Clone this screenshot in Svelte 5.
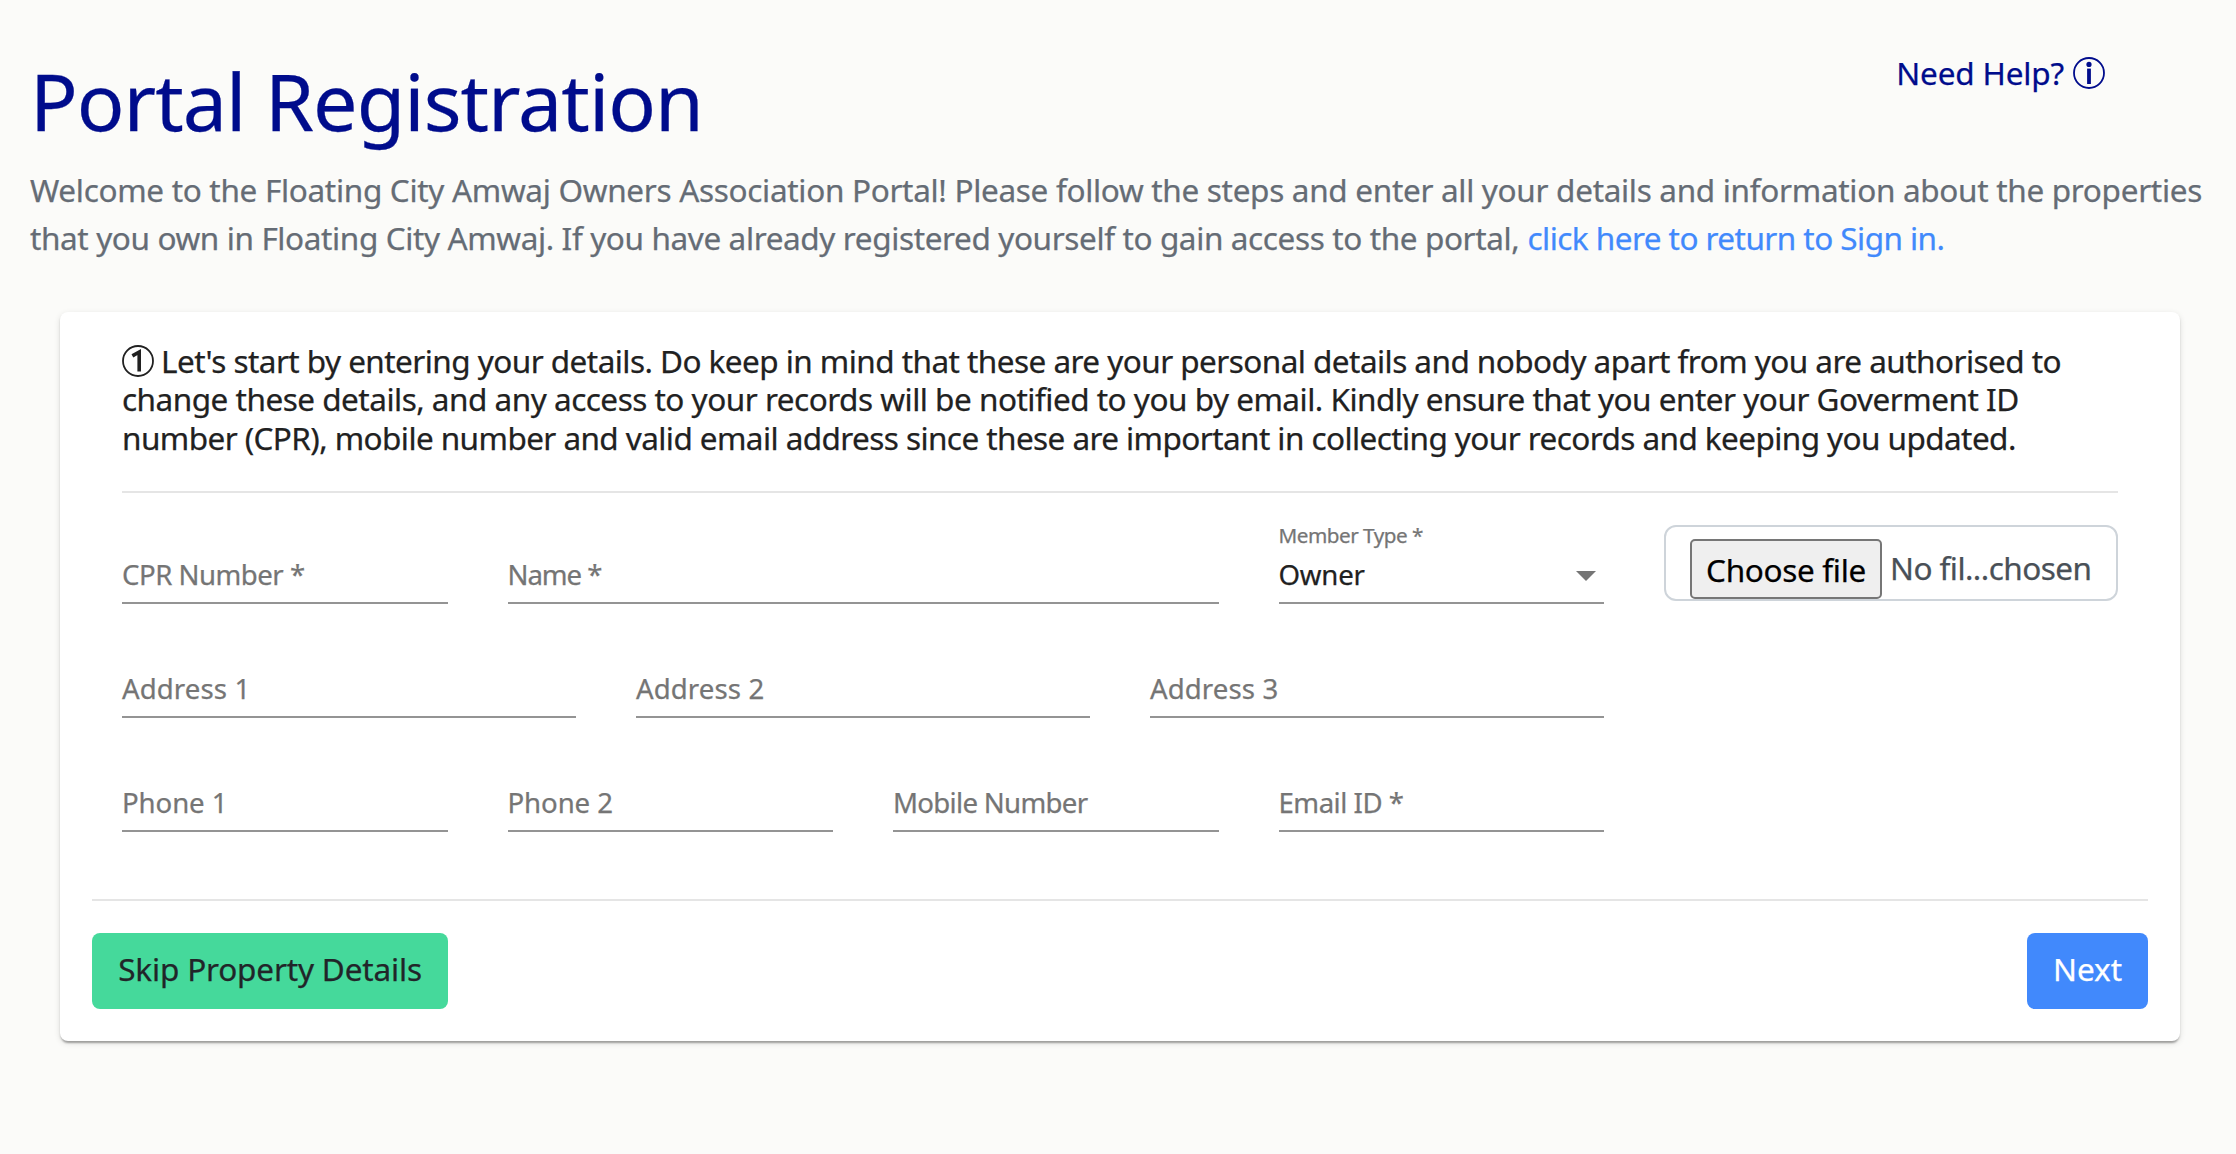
<script>
  const rows = [
    [
      { label: 'CPR Number *', span: 3 },
      { label: 'Name *', span: 6, tone: 'tight' },
      { label: 'Member Type *', span: 3, value: 'Owner' },
      { file: true }
    ],
    [
      { label: 'Address 1', span: 4, tone: 'loose' },
      { label: 'Address 2', span: 4, tone: 'loose' },
      { label: 'Address 3', span: 4, tone: 'loose' }
    ],
    [
      { label: 'Phone 1', span: 3, tone: 'digit' },
      { label: 'Phone 2', span: 3, tone: 'digit' },
      { label: 'Mobile Number', span: 3, tone: 'snug' },
      { label: 'Email ID *', span: 3 }
    ]
  ];
</script>

<main>
  <header>
    <h1>Portal Registration</h1>
    <a class="help" href="#help">
      <span>Need Help?</span>
      <svg width="32" height="32" viewBox="0 0 32 32" aria-hidden="true">
        <circle cx="16" cy="16" r="15" fill="none" stroke="currentColor" stroke-width="1.8" />
        <circle cx="16" cy="7.4" r="2.6" fill="currentColor" />
        <path d="M16 11.6V27" stroke="currentColor" stroke-width="3.8" />
      </svg>
    </a>
  </header>
  <p class="intro">
    <span class="i1">Welcome to the Floating City Amwaj Owners Association Portal! Please follow the steps and enter all your details and information about the properties</span><br />
    <span class="i2">that you own in Floating City Amwaj. If you have already registered yourself to gain access to the portal,</span>
    <a href="#signin">click here to return to Sign in.</a>
  </p>

  <section class="card">
    <div class="body">
      <p class="lead">
        <span class="l1">
          <svg width="32" height="32" viewBox="0 0 32 32" aria-hidden="true">
            <circle cx="16" cy="16" r="15" fill="none" stroke="currentColor" stroke-width="1.8" />
            <path d="M10.4 10.9L17.2 7V26.6" fill="none" stroke="currentColor" stroke-width="3.6" />
          </svg>
          Let's start by entering your details. Do keep in mind that these are your personal details and nobody apart from you are authorised to
        </span>
        <span class="l2">change these details, and any access to your records will be notified to you by email. Kindly ensure that you enter your Goverment ID</span>
        <span class="l3">number (CPR), mobile number and valid email address since these are important in collecting your records and keeping you updated.</span>
      </p>
      <hr />
      <form>
        {#each rows as row}
          <div class="row">
            {#each row as f}
              {#if f.file}
                <div class="file span4">
                  <button type="button" class="choose">Choose file</button>
                  <span class="none">No fil...chosen</span>
                </div>
              {:else}
                <div class="field span{f.span}">
                  {#if f.value}
                    <span class="small">{f.label}</span>
                    <div class="select"><span>{f.value}</span><i></i></div>
                  {:else}
                    <span class={f.tone}>{f.label}</span>
                  {/if}
                </div>
              {/if}
            {/each}
          </div>
        {/each}
      </form>
    </div>
    <hr />
    <footer>
      <button type="button" class="btn skip">Skip Property Details</button>
      <button type="button" class="btn next">Next</button>
    </footer>
  </section>
</main>

<style>
  :global(body) { margin: 0; background: #fbfbf9; }
  main {
    font-family: 'Noto Sans', sans-serif;
    font-size: 31.5px;
    padding: 48px 30px 0;
    min-height: 1154px;
    box-sizing: border-box;
    white-space: nowrap;
    -webkit-text-stroke: 0.25px currentColor;
  }
  header { display: flex; justify-content: space-between; align-items: flex-start; padding-right: 101px; color: #000c8c; }
  h1 { margin: 5px 0 0; font-size: 79px; line-height: 96px; font-weight: 400; letter-spacing: -1px; }
  .help { display: flex; gap: 9px; padding-top: 1px; line-height: 48px; color: inherit; text-decoration: none; letter-spacing: -0.16px; }
  .help svg { margin-top: 8px; }
  .intro { margin: 17px 0 50px; line-height: 48px; color: #656c75; }
  .i1 { letter-spacing: -0.31px; }
  .i2 { letter-spacing: -0.38px; }
  .intro a { color: #4189fc; text-decoration: none; letter-spacing: -0.55px; }

  .card {
    margin: 0 26px 0 30px;
    padding: 30px 32px 32px;
    background: #fff;
    border-radius: 8px;
    box-shadow: 0 4px 2px -2px rgba(0, 0, 0, .2), 0 2px 2px 0 rgba(0, 0, 0, .14), 0 2px 6px 0 rgba(0, 0, 0, .12);
  }
  .body { padding: 0 30px; }
  .lead { margin: 0 0 33.8px; line-height: 38.4px; color: #212121; }
  .lead span { display: flex; }
  .lead svg { margin: 3px 7px -3px 0; }
  .l1 { letter-spacing: -0.55px; }
  .l2 { letter-spacing: -0.5px; }
  .l3 { letter-spacing: -0.58px; }
  hr { border: 0; height: 2px; margin: 0; background: #e5e5e5; }

  form { padding: 25px 0 67px; display: grid; gap: 28px; }
  .row { display: grid; grid-template-columns: repeat(16, minmax(0, 1fr)); column-gap: 60px; height: 86px; }
  .span3 { grid-column: span 3; }
  .span4 { grid-column: span 4; }
  .span6 { grid-column: span 6; }
  .field {
    display: flex;
    flex-direction: column;
    justify-content: flex-end;
    border-bottom: 2px solid #949494;
    padding-bottom: 12px;
    font-size: 27.6px;
    line-height: 32px;
    color: #757575;
    letter-spacing: -0.5px;
  }
  .tight { letter-spacing: -1.05px; }
  .snug { letter-spacing: -0.7px; }
  .loose { letter-spacing: 0.1px; }
  .digit { letter-spacing: -0.1px; }
  .small { font-size: 20.7px; line-height: 24px; margin-bottom: 11px; }
  .select { display: flex; justify-content: space-between; align-items: center; color: #212121; letter-spacing: -0.22px; }
  .select i { border: 10px solid transparent; border-top-color: #757575; border-bottom: 0; margin: 3px 8px 0 0; }

  .file {
    margin-top: 7px;
    height: 76px;
    box-sizing: border-box;
    border: 2px solid #ced4da;
    border-radius: 12px;
    padding: 12px 24px 0;
    display: flex;
    align-items: flex-start;
    gap: 8px;
    color: #495057;
    line-height: 57px;
    letter-spacing: -0.55px;
  }
  button { font: inherit; letter-spacing: inherit; -webkit-text-stroke: inherit; }
  .choose {
    width: 192px;
    height: 60px;
    box-sizing: border-box;
    padding: 0 0 5px;
    border: 2px solid #767676;
    border-radius: 5px;
    background: #efefef;
    color: #000;
    letter-spacing: -0.32px;
  }
  footer { display: flex; justify-content: space-between; padding-top: 32px; }
  .btn { height: 76px; border: 0; border-radius: 8px; padding: 0 0 5px; }
  .skip { width: 356px; background: #45d99b; color: #212529; letter-spacing: -0.17px; }
  .next { width: 121px; background: #4189fc; color: #fff; }
</style>
